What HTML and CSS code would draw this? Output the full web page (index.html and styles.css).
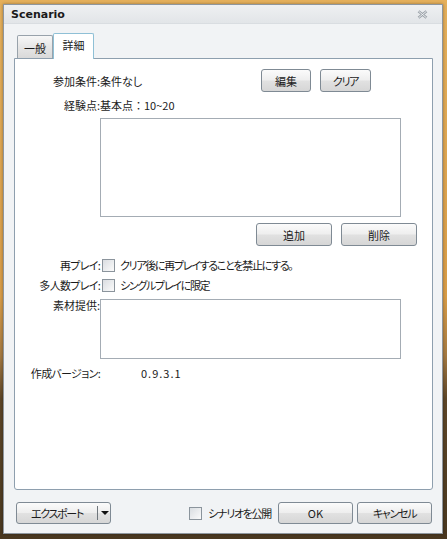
FILE: index.html
```html
<!DOCTYPE html>
<html>
<head>
    <title>Scenario</title>
    <link rel="stylesheet" href="styles.css">
</head>
<body>
    <div class="window">
        <div class="titlebar">
            <span class="title">Scenario</span>
            <svg class="close" width="11" height="9" viewBox="0 0 11 9">
                <path d="M1.5 1.2 L9.5 7.8 M9.5 1.2 L1.5 7.8" fill="none" stroke="#9aa1a8" stroke-width="2.6"/>
                <path d="M1.5 1.2 L9.5 7.8 M9.5 1.2 L1.5 7.8" fill="none" stroke="#f4f5f6" stroke-width="0.9"/>
            </svg>
        </div>

        <div class="content">
            <div class="tabs">
                <div class="tab">一般</div>
                <div class="tab active">詳細</div>
            </div>

            <div class="panel">
                <div class="row cond">
                    <span class="lbl">参加条件:</span>
                    <span>条件なし</span>
                    <div class="btns">
                        <button class="btn small">編集</button>
                        <button class="btn small kn">クリア</button>
                    </div>
                </div>

                <div class="row exp">
                    <span class="lbl">経験点:</span>
                    <span class="plain">基本点：10~20</span>
                </div>

                <div class="listbox"></div>

                <div class="row actions">
                    <button class="btn wide">追加</button>
                    <button class="btn wide">削除</button>
                </div>

                <div class="row check first">
                    <span class="lbl kn-s">再プレイ:</span>
                    <span class="box"></span>
                    <span class="kn">クリア後に再プレイすることを禁止にする。</span>
                </div>

                <div class="row check">
                    <span class="lbl kn-s">多人数プレイ:</span>
                    <span class="box"></span>
                    <span class="kn">シングルプレイに限定</span>
                </div>

                <div class="row material">
                    <span class="lbl">素材提供:</span>
                    <div class="textbox"></div>
                </div>

                <div class="row version">
                    <span class="lbl kn-s">作成バージョン:</span>
                    <span class="ver">0.9.3.1</span>
                </div>
            </div>

            <div class="footer">
                <button class="btn split">
                    <span class="split-text kn">エクスポート</span>
                    <span class="split-sep"></span>
                    <span class="split-arrow"></span>
                </button>
                <label class="publish">
                    <span class="box"></span>
                    <span class="kn">シナリオを公開</span>
                </label>
                <button class="btn foot">OK</button>
                <button class="btn foot kn">キャンセル</button>
            </div>
        </div>
    </div>
</body>
</html>
```

FILE: styles.css
```css
body { margin: 0; height: 539px; overflow: hidden; font-family: "Noto Sans CJK JP", "Noto Sans", sans-serif; font-size: 11px; color: #1b1b1b; font-feature-settings: "palt"; background: linear-gradient(to bottom, #e5b05c 0, #d99d48 55%, #a57a42 66%, #5d4628 74%, #4a3820 100%); }

.window { margin: 4px 0 0 3px; width: 440px; height: 530px; box-sizing: border-box; border: 1px solid #8e969e; background: #f1f3f5; display: flex; flex-direction: column; box-shadow: 0 0 3px rgba(0,0,0,0.35); }

.titlebar { height: 18px; border-bottom: 1px solid #d9dde1; background: linear-gradient(#eef0f2, #e2e5e8); display: flex; align-items: center; padding: 0 0 0 7px; }
.title { font-family: "DejaVu Sans", sans-serif; font-weight: bold; font-size: 11px; color: #1a1a1a; }
.close { margin-left: auto; margin-right: 14px; }

.content { flex: 1; display: flex; flex-direction: column; padding: 9px 9px 9px 10px; }

/* narrow kana, like the original UI font */
.kn { letter-spacing: -1.3px; }
.kn-s { letter-spacing: -0.7px; }
.plain { font-feature-settings: normal; }

.tabs { display: flex; align-items: flex-end; padding-left: 3px; height: 25px; }
.tab { width: 34px; height: 21px; border: 1px solid #98a2ab; border-bottom: none; border-radius: 2px 2px 0 0; background: linear-gradient(#f7f7f7, #e6e6e6 50%, #d9d9d9); display: flex; align-items: center; justify-content: center; padding-top: 1px; }
.tab.active { width: 39px; height: 22px; margin-bottom: -1px; border-color: #8fc0d6; background: #fff; position: relative; z-index: 1; align-items: flex-start; padding-top: 3px; }

.panel { flex: 1; border: 1px solid #8e9fae; border-radius: 0 0 3px 3px; background: #fff; padding-top: 10px; }

.row { display: flex; align-items: center; }
.lbl { width: 85px; text-align: right; flex-shrink: 0; }

.cond { height: 23px; }
.btns { margin-left: auto; margin-right: 61px; display: flex; gap: 9px; }

.btn { font-family: inherit; font-size: 11px; color: #1b1b1b; font-feature-settings: "palt"; border: 1px solid #7f8a94; border-radius: 3px; background: linear-gradient(#fbfbfb, #eeeeee 48%, #e1e1e1 52%, #d6d6d6); padding: 0; display: flex; align-items: center; justify-content: center; }
.btn.small { width: 50px; height: 23px; }
.btn.small + .btn.small { width: 51px; }

.exp { height: 16px; margin-top: 5px; }

.listbox { margin: 5px 0 0 85px; width: 301px; height: 99px; box-sizing: border-box; border: 1px solid #a4acb4; background: #fff; }

.actions { margin-top: 6px; justify-content: flex-end; gap: 9px; padding-right: 15px; }
.btn.wide { width: 76px; height: 23px; }

.check { height: 16px; margin-top: 4px; }
.check.first { margin-top: 11px; }
.box { width: 11px; height: 11px; border: 1px solid #8b949c; background: linear-gradient(135deg, #d9dde1, #fbfbfb); flex-shrink: 0; }
.check .box { margin: 0 5px 0 2px; }

.material { margin-top: 6px; align-items: flex-start; }
.material .lbl { margin-top: -2px; }
.textbox { width: 301px; height: 60px; box-sizing: border-box; border: 1px solid #a4acb4; }

.version { height: 16px; margin-top: 6px; }
.ver { margin-left: 41px; letter-spacing: 1px; }

.footer { display: flex; align-items: center; margin-top: 12px; height: 22px; }
.btn.split { width: 95px; height: 22px; margin-left: 2px; justify-content: flex-start; }
.split-text { width: 80px; text-align: center; }
.split-sep { width: 1px; height: 14px; background: #6f767c; }
.split-arrow { margin-left: 3px; width: 0; height: 0; border-left: 4px solid transparent; border-right: 4px solid transparent; border-top: 4px solid #111; }

.publish { margin-left: auto; display: flex; align-items: center; gap: 6px; margin-right: 7px; }
.btn.foot { width: 75px; height: 22px; }
.btn.foot + .btn.foot { margin-left: 4px; margin-right: 1px; }
```
